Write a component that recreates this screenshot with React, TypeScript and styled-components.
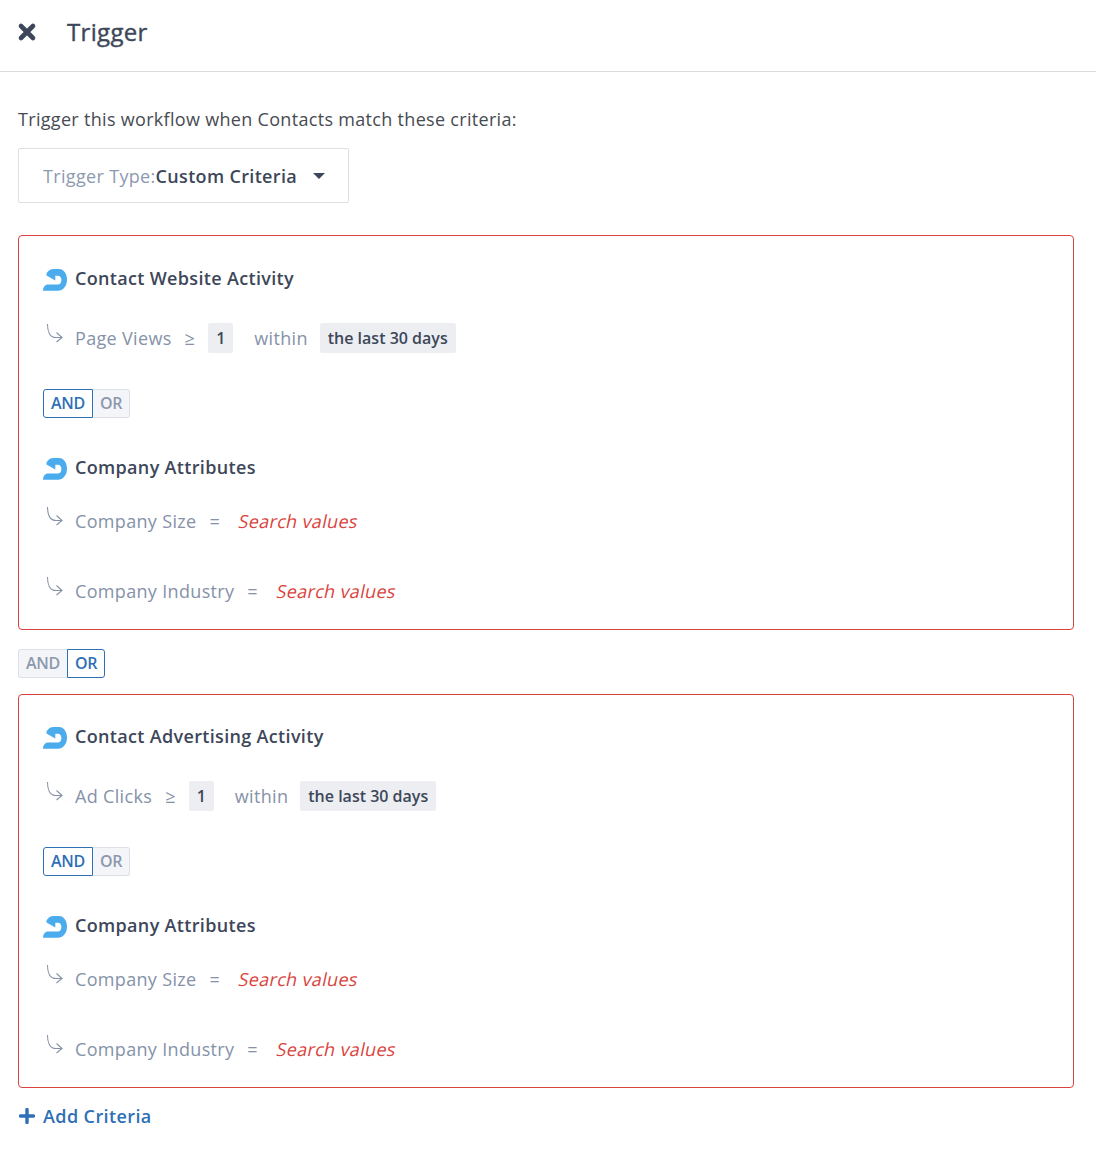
import React from "react";
import styled, { createGlobalStyle } from "styled-components";

const Global = createGlobalStyle`
  html, body { margin: 0; padding: 0; background: #fff; }
  body { font-family: "Open Sans", "Liberation Sans", sans-serif; color: #3d4759; letter-spacing: 0.33px; }
`;

const Page = styled.div`
  width: 1096px;
  height: 1158px;
  overflow: hidden;
`;

const Header = styled.header`
  display: flex;
  align-items: center;
  height: 72px;
  padding: 0 0 7px 17px;
  box-sizing: border-box;
  border-bottom: 1px solid #dcdcdc;
  gap: 30px;
`;

const Title = styled.h1`
  margin: 0;
  font-size: 24px;
  font-weight: 400;
  line-height: 32px;
  -webkit-text-stroke: 0.4px #3d4759;
  color: #3d4759;
`;

const Body = styled.main`
  padding: 34px 22px 0 18px;
`;

const Intro = styled.p`
  margin: 0;
  font-size: 18px;
  line-height: 26px;
  letter-spacing: 0.31px;
  color: #474b52;
`;

const Select = styled.div`
  display: flex;
  align-items: center;
  width: 331px;
  height: 55px;
  margin-top: 16px;
  padding-left: 24px;
  box-sizing: border-box;
  border: 1px solid #dcdfe4;
  border-radius: 2px;
  font-size: 18px;
`;

const SelectLabel = styled.span`
  color: #8d9ab0;
`;

const SelectValue = styled.span`
  font-weight: 600;
  color: #3d4759;
`;

const Caret = styled.span`
  width: 0;
  height: 0;
  margin-left: 16px;
  border-left: 6px solid transparent;
  border-right: 6px solid transparent;
  border-top: 6px solid #3d4759;
`;

const Card = styled.section<{ $top: number; $height: number; $pad: number }>`
  margin-top: ${(p) => p.$top}px;
  height: ${(p) => p.$height}px;
  box-sizing: border-box;
  padding: ${(p) => p.$pad}px 24px 0;
  border: 1px solid #d9433d;
  border-radius: 4px;
`;

const GroupTitle = styled.div<{ $top?: number }>`
  display: flex;
  align-items: center;
  gap: 8px;
  height: 26px;
  margin-top: ${(p) => p.$top ?? 0}px;
  font-size: 18px;
  font-weight: 600;
  color: #3d4759;
`;

const Logo = styled.svg`
  width: 24px;
  height: 22px;
  margin-top: 4px;
  flex: none;
`;

const Row = styled.div<{ $top: number }>`
  display: flex;
  align-items: center;
  height: 30px;
  margin-top: ${(p) => p.$top}px;
  padding-left: 3px;
  font-size: 18px;
  color: #8592a8;
`;

const Elbow = styled.svg`
  width: 18px;
  height: 22px;
  margin: -8px 11px 0 0;
  flex: none;
`;

const Op = styled.span<{ $right: number }>`
  margin: 0 ${(p) => p.$right}px 0 13px;
`;

const Chip = styled.span`
  display: flex;
  align-items: center;
  justify-content: center;
  height: 30px;
  padding: 0 8px;
  border-radius: 2px;
  background: #eceef2;
  font-size: 16px;
  font-weight: 600;
  letter-spacing: 0;
  color: #3d4759;
`;

const NumberChip = styled(Chip)`
  width: 25px;
  padding: 0;
`;

const Within = styled.span`
  margin: 0 12px 0 21px;
`;

const Missing = styled.span`
  display: inline-block;
  transform: skewX(-12deg);
  color: #d9433d;
`;

const Toggle = styled.div<{ $top: number }>`
  display: flex;
  width: fit-content;
  height: 29px;
  margin-top: ${(p) => p.$top}px;
`;

const ToggleOption = styled.span<{ $active?: boolean }>`
  display: flex;
  align-items: center;
  justify-content: center;
  box-sizing: border-box;
  padding: 0 7px 2px;
  font-size: 16px;
  font-weight: 600;
  letter-spacing: -0.3px;
  color: ${(p) => (p.$active ? "#2e6fb5" : "#8d98ad")};
  background: ${(p) => (p.$active ? "#fff" : "#f3f5f9")};
  border: 1px solid ${(p) => (p.$active ? "#2e6fb5" : "#dde0e7")};
  &:first-child { border-radius: 3px 0 0 3px; }
  &:last-child { border-radius: 0 3px 3px 0; }
  &:first-child:not(:last-child) { border-right-width: ${(p) => (p.$active ? 1 : 0)}px; }
  &:last-child:not(:first-child) { border-left-width: ${(p) => (p.$active ? 1 : 0)}px; }
`;

const AddCriteria = styled.button`
  display: flex;
  align-items: center;
  gap: 8px;
  height: 30px;
  margin-top: 13px;
  padding: 0 0 0 1px;
  border: 0;
  background: none;
  font: 600 18px "Open Sans", "Liberation Sans", sans-serif;
  letter-spacing: 0.4px;
  color: #2e6fb5;
`;

const CloseIcon = () => (
  <svg width="20" height="20" viewBox="0 0 20 20" aria-hidden="true">
    <path d="M4 4 16 16M16 4 4 16" stroke="#3d4759" strokeWidth="4.6" strokeLinecap="round" />
  </svg>
);

const LogoIcon = () => (
  <Logo viewBox="0 0 24 22" aria-hidden="true">
    <path
      d="M3.5 4.5C5 2 7 0 11 0H16C21 0 24 5 24 10.7C24 17 20 21.7 15 21.7H0C0 19 1 16.5 4 15.5H15C17 15.5 18.4 13.5 18.4 11C18.4 8.5 17 6.7 15 6.7H12.3V11.5L3.5 6.5Z"
      fill="#4aaced"
    />
  </Logo>
);

const ElbowIcon = () => (
  <Elbow viewBox="0 0 18 22" fill="none" stroke="#8592a8" strokeWidth="1.1" aria-hidden="true">
    <path d="M1.5 1C1.5 8 3.5 14.5 10 14.5H15.5" />
    <path d="M10.5 9.5 16 14.5 10.5 19" />
  </Elbow>
);

const PlusIcon = () => (
  <svg width="16" height="16" viewBox="0 0 16 16" aria-hidden="true">
    <path d="M8 1.5V14.5M1.5 8H14.5" stroke="#2e6fb5" strokeWidth="3.4" strokeLinecap="round" />
  </svg>
);

const Group = ({
  title,
  metric,
  top,
  height,
  pad,
}: {
  title: string;
  metric: string;
  top: number;
  height: number;
  pad: number;
}) => (
  <Card $top={top} $height={height} $pad={pad}>
    <GroupTitle>
      <LogoIcon />
      {title}
    </GroupTitle>
    <Row $top={32}>
      <ElbowIcon />
      {metric}
      <Op $right={13}>≥</Op>
      <NumberChip>1</NumberChip>
      <Within>within</Within>
      <Chip>the last 30 days</Chip>
    </Row>
    <Toggle $top={36}>
      <ToggleOption $active>AND</ToggleOption>
      <ToggleOption>OR</ToggleOption>
    </Toggle>
    <GroupTitle $top={36}>
      <LogoIcon />
      Company Attributes
    </GroupTitle>
    <Row $top={26}>
      <ElbowIcon />
      Company Size
      <Op $right={19}>=</Op>
      <Missing>Search values</Missing>
    </Row>
    <Row $top={40}>
      <ElbowIcon />
      Company Industry
      <Op $right={19}>=</Op>
      <Missing>Search values</Missing>
    </Row>
  </Card>
);

export default function App() {
  return (
    <Page>
      <Global />
      <Header>
        <CloseIcon />
        <Title>Trigger</Title>
      </Header>
      <Body>
        <Intro>Trigger this workflow when Contacts match these criteria:</Intro>
        <Select>
          <SelectLabel>Trigger Type:</SelectLabel>
          <SelectValue>Custom Criteria</SelectValue>
          <Caret />
        </Select>
        <Group top={32} height={395} pad={29} title="Contact Website Activity" metric="Page Views" />
        <Toggle $top={19}>
          <ToggleOption>AND</ToggleOption>
          <ToggleOption $active>OR</ToggleOption>
        </Toggle>
        <Group top={16} height={394} pad={28} title="Contact Advertising Activity" metric="Ad Clicks" />
        <AddCriteria>
          <PlusIcon />
          Add Criteria
        </AddCriteria>
      </Body>
    </Page>
  );
}
